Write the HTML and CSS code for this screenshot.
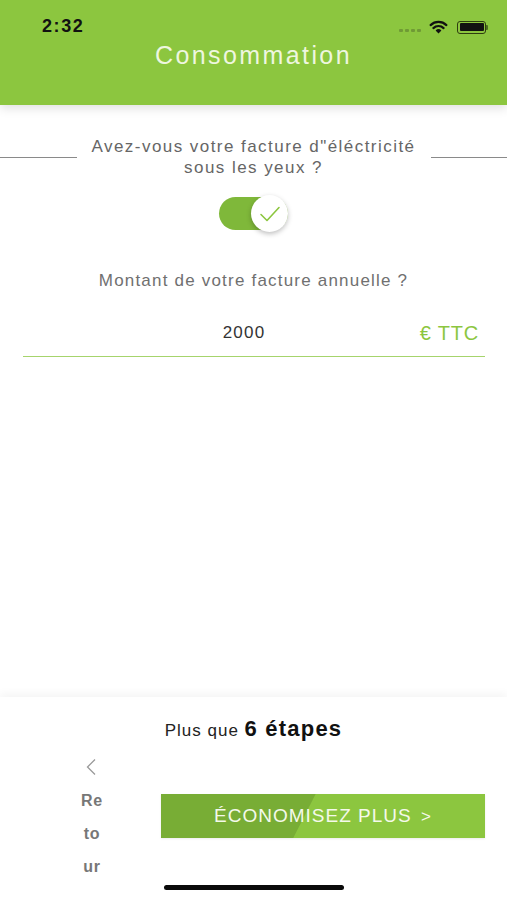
FILE: index.html
```html
<!DOCTYPE html>
<html lang="fr">
<head>
<meta charset="utf-8">
<title>Consommation</title>
<link rel="stylesheet" href="styles.css">
</head>
<body>
<div class="screen">
  <header class="header">
    <div class="status">
      <span class="time">2:32</span>
      <span class="status-icons">
        <span class="dots"><i></i><i></i><i></i><i></i></span>
        <svg class="wifi" width="19" height="14" viewBox="0 0 19 14">
          <path d="M9.5 13.5 L6.6 10.4 A4.2 4.2 0 0 1 12.4 10.4 Z" fill="#111"/>
          <path d="M4.4 8.1 A7.3 7.3 0 0 1 14.6 8.1" stroke="#111" stroke-width="2.2" fill="none" stroke-linecap="round"/>
          <path d="M1.6 5.1 A11.4 11.4 0 0 1 17.4 5.1" stroke="#111" stroke-width="2.2" fill="none" stroke-linecap="round"/>
        </svg>
        <span class="battery"><span class="battery-fill"></span></span><span class="battery-cap"></span>
      </span>
    </div>
    <h1 class="title">Consommation</h1>
  </header>

  <main class="content">
    <div class="question">
      <span class="rule"></span>
      <p class="question-text">Avez-vous votre facture d"éléctricité sous les yeux ?</p>
      <span class="rule"></span>
    </div>

    <div class="toggle-wrap">
      <div class="toggle">
        <div class="knob">
          <svg width="22" height="18" viewBox="0 0 22 18">
            <path d="M2 9.5 L8 15.5 L20 2.5" stroke="#8cc63f" stroke-width="1.6" fill="none" stroke-linecap="round" stroke-linejoin="round"/>
          </svg>
        </div>
      </div>
    </div>

    <p class="label">Montant de votre facture annuelle ?</p>

    <div class="amount">
      <span class="amount-value">2000</span>
      <span class="amount-unit">€ TTC</span>
    </div>
  </main>

  <footer class="footer">
    <p class="steps">Plus que <strong>6 étapes</strong></p>
    <div class="actions">
      <div class="back">
        <svg class="chev" width="12" height="18" viewBox="0 0 12 18">
          <path d="M10 1.5 L2.5 9 L10 16.5" stroke="#9a9a9a" stroke-width="1.3" fill="none"/>
        </svg>
        <span class="back-text">Re</span>
        <span class="back-text">to</span>
        <span class="back-text">ur</span>
      </div>
      <button class="cta">ÉCONOMISEZ PLUS <span class="cta-arrow">&gt;</span></button>
    </div>
    <div class="home-indicator"></div>
  </footer>
</div>
</body>
</html>
```

FILE: styles.css
```css
* { box-sizing: border-box; }
html, body { margin: 0; padding: 0; background: #fff; }
body { font-family: "Liberation Sans", Arial, sans-serif; }

.screen {
  width: 507px;
  height: 900px;
  display: flex;
  flex-direction: column;
  overflow: hidden;
}

.header {
  height: 105px;
  background: #8cc63f;
  box-shadow: 0 3px 10px rgba(0,0,0,0.13);
  position: relative;
  z-index: 2;
}

.status {
  height: 20px;
  margin-top: 16px;
  display: flex;
  align-items: center;
  justify-content: space-between;
  padding: 0 19px 0 42px;
}
.time {
  font-size: 18px;
  font-weight: bold;
  color: #111;
  letter-spacing: 1.6px;
}
.status-icons {
  display: flex;
  align-items: center;
  margin-top: 2px;
}
.dots { display: flex; gap: 2px; margin-right: 8px; margin-top: 7px; }
.dots i { width: 4px; height: 3px; background: #6f9a35; border-radius: 1px; display: block; }
.wifi { margin-right: 9px; }
.battery {
  width: 29px;
  height: 13px;
  border: 1.5px solid #2e3d10;
  border-radius: 3px;
  padding: 1.5px;
  display: flex;
}
.battery-fill { flex: 1; background: #111; border-radius: 1px; }
.battery-cap { width: 2px; height: 5px; background: #4d6b22; border-radius: 0 1px 1px 0; }

.title {
  margin: 4px 0 0;
  text-align: center;
  font-weight: normal;
  font-size: 25px;
  line-height: 30px;
  letter-spacing: 2.4px;
  color: #eef6df;
}

.content { flex: 1; }

.question {
  margin-top: 31px;
  display: flex;
  align-items: center;
}
.rule { flex: 1; height: 1px; background: #8a8a8a; }
.question-text {
  margin: 0 12px;
  width: 330px;
  text-align: center;
  font-size: 17px;
  line-height: 21px;
  letter-spacing: 1.45px;
  color: #666;
}

.toggle-wrap {
  display: flex;
  justify-content: center;
  margin-top: 19px;
}
.toggle {
  width: 69px;
  height: 33px;
  border-radius: 17px;
  background: #7fb83a;
  display: flex;
  justify-content: flex-end;
  align-items: center;
}
.knob {
  width: 37px;
  height: 37px;
  border-radius: 50%;
  background: #fff;
  box-shadow: 0 2px 5px rgba(0,0,0,0.25);
  display: flex;
  align-items: center;
  justify-content: center;
}

.label {
  margin: 40px 0 0;
  text-align: center;
  font-size: 17px;
  line-height: 21px;
  letter-spacing: 1.2px;
  color: #707070;
}

.amount {
  margin: 21px 22px 0 23px;
  height: 45px;
  border-bottom: 1.5px solid #a6d46c;
  position: relative;
  display: flex;
  align-items: center;
  justify-content: center;
  padding-bottom: 2px;
}
.amount-value {
  font-size: 17px;
  letter-spacing: 1.2px;
  color: #333;
  margin-left: -20px;
}
.amount-unit {
  position: absolute;
  right: 6px;
  top: 10px;
  font-size: 20px;
  letter-spacing: 0.8px;
  color: #8cc63f;
}

.footer {
  height: 203px;
  background: #fff;
  box-shadow: 0 -4px 8px rgba(0,0,0,0.04);
  display: flex;
  flex-direction: column;
  align-items: stretch;
}
.steps {
  margin: 20px 0 0;
  text-align: center;
  font-size: 17px;
  line-height: 24px;
  color: #222;
  letter-spacing: 1px;
}
.steps strong { font-size: 22px; color: #111; letter-spacing: 1.2px; }

.actions {
  display: flex;
  align-items: flex-start;
  margin-top: 15px;
}
.back {
  width: 60px;
  margin-left: 62px;
  display: flex;
  flex-direction: column;
  align-items: center;
}
.chev { margin-bottom: 8px; margin-left: -2px; }
.back-text {
  font-size: 16px;
  font-weight: bold;
  color: #777;
  line-height: 33px;
  letter-spacing: 0.8px;
}
.cta {
  margin-left: 39px;
  margin-top: 36px;
  width: 324px;
  height: 44px;
  border: none;
  padding: 0;
  font-family: "Liberation Sans", Arial, sans-serif;
  font-size: 19px;
  letter-spacing: 1px;
  color: #f4f9ea;
  background: linear-gradient(117deg, #78ad35 0%, #78ad35 44.5%, #8cc63f 44.8%, #8cc63f 100%);
  box-shadow: 0 1px 2px rgba(0,0,0,0.08);
}
.cta-arrow { font-size: 17px; margin-left: 3px; }

.home-indicator {
  width: 180px;
  height: 5px;
  border-radius: 3px;
  background: #0a0a0a;
  margin: auto auto 10px;
}
```
